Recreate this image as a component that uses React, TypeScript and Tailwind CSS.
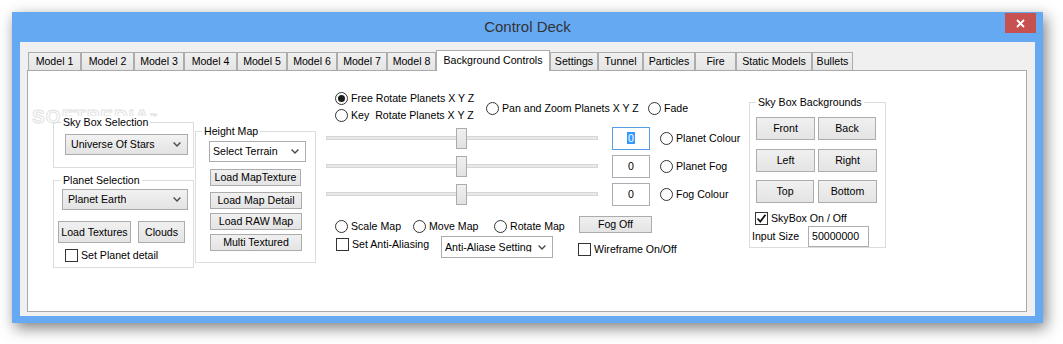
import React from 'react';

const ui = "font-['Liberation_Sans',Arial,sans-serif]";

function Chevron() {
  return (
    <svg width="8" height="5" viewBox="0 0 8 5" className="shrink-0">
      <path d="M0.6 0.6 L4 4 L7.4 0.6" fill="none" stroke="#4a4a4a" strokeWidth="1.4" />
    </svg>
  );
}

// gray = DropDownList look, white = DropDown look
function Combo({ text, className, gray }: { text: string; className: string; gray?: boolean }) {
  return (
    <div
      className={`flex items-center justify-between gap-[6px] overflow-hidden border border-[#acacac] pr-[6px] text-[10.6px] leading-none ${
        gray ? 'bg-gradient-to-b from-[#f2f2f2] to-[#e3e3e3] pl-[5px]' : 'bg-white pl-[3px]'
      } ${className}`}
    >
      <span className="min-w-0 overflow-hidden whitespace-nowrap">{text}</span>
      <Chevron />
    </div>
  );
}

function Btn({ label, className }: { label: string; className: string }) {
  return (
    <button
      type="button"
      className={`flex shrink-0 items-center justify-center whitespace-nowrap border border-[#acacac] bg-gradient-to-b from-[#f0f0f0] to-[#e4e4e4] text-[10.6px] leading-none text-black ${className}`}
    >
      {label}
    </button>
  );
}

function Radio({ checked }: { checked?: boolean }) {
  return (
    <span className="flex h-[13px] w-[13px] shrink-0 items-center justify-center rounded-full border border-[#333] bg-white">
      {checked && <span className="h-[7px] w-[7px] rounded-full bg-[#1c1c1c]" />}
    </span>
  );
}

function Check({ checked }: { checked?: boolean }) {
  return (
    <span className="flex h-[13px] w-[13px] shrink-0 items-center justify-center border border-[#333] bg-white">
      {checked && (
        <svg width="11" height="11" viewBox="0 0 11 11">
          <path d="M1.5 5.5 L4.3 8.5 L9.5 1.8" fill="none" stroke="#111" strokeWidth="1.8" />
        </svg>
      )}
    </span>
  );
}

function Group({ title, titleLeft, className, children }: { title: string; titleLeft: string; className: string; children: React.ReactNode }) {
  return (
    <div className={`relative shrink-0 border border-[#dcdcdc] ${className}`}>
      <span className={`absolute -top-[7px] bg-white px-[2px] text-[10.6px] leading-[13px] whitespace-nowrap ${titleLeft}`}>{title}</span>
      {children}
    </div>
  );
}

function SliderRow({ value, focused, label }: { value: string; focused?: boolean; label: string }) {
  return (
    <div className="flex h-[28px] items-center">
      <div className="relative flex h-[21px] w-[272px] items-center">
        <div className="h-[4px] w-full border border-[#d6d6d6] bg-[#e7eaea]" />
        <div className="absolute left-[130px] top-0 h-[21px] w-[11px] border border-[#acacac] bg-gradient-to-b from-[#f0f0f0] to-[#e2e2e2]" />
      </div>
      <div
        className={`ml-[14px] flex h-[23px] w-[38px] items-center justify-center border bg-white text-[10.6px] ${
          focused ? 'border-[#569de5]' : 'border-[#abadb3]'
        }`}
      >
        {focused ? <span className="bg-[#3399ff] px-[1px] leading-[12px] text-white">{value}</span> : value}
      </div>
      <div className="ml-[10px] flex items-center gap-[3px]">
        <Radio />
        <span className="whitespace-nowrap">{label}</span>
      </div>
    </div>
  );
}

const tabs = [
  { t: 'Model 1', w: 'w-[53px]' },
  { t: 'Model 2', w: 'w-[53px]' },
  { t: 'Model 3', w: 'w-[50px]' },
  { t: 'Model 4', w: 'w-[53px]' },
  { t: 'Model 5', w: 'w-[50px]' },
  { t: 'Model 6', w: 'w-[50px]' },
  { t: 'Model 7', w: 'w-[50px]' },
  { t: 'Model 8', w: 'w-[49px]' },
  { t: 'Background Controls', w: 'w-[114px]', active: true },
  { t: 'Settings', w: 'w-[48px]' },
  { t: 'Tunnel', w: 'w-[45px]' },
  { t: 'Particles', w: 'w-[52px]' },
  { t: 'Fire', w: 'w-[41px]' },
  { t: 'Static Models', w: 'w-[76px]' },
  { t: 'Bullets', w: 'w-[41px]' },
];

export default function App() {
  return (
    <div className={`h-[344px] w-[1063px] overflow-hidden bg-white pl-[12px] pt-[12px] text-black ${ui}`}>
      <div className="flex h-[311px] w-[1031px] flex-col bg-[#66a9f3] shadow-[3px_5px_14px_rgba(0,0,0,0.5)]">
        {/* title bar */}
        <div className="grid h-[30px] shrink-0 grid-cols-[1fr_auto_1fr]">
          <div />
          <div className="self-center pt-[1px] text-[15px] text-[#333]">Control Deck</div>
          <div className="flex justify-end pr-[7px] pt-[1px]">
            <div className="flex h-[20px] w-[31px] items-center justify-center bg-[#c75050]">
              <svg width="9" height="9" viewBox="0 0 9 9">
                <path d="M1 1 L8 8 M8 1 L1 8" stroke="#fff" strokeWidth="1.8" />
              </svg>
            </div>
          </div>
        </div>

        {/* client area */}
        <div className="mx-[8px] h-[274px] bg-[#f0f0f0] pl-[7px] pt-[8px]">
          <div className="ml-[1px] flex h-[20px] items-end">
            {tabs.map((tab) =>
              tab.active ? (
                <div
                  key={tab.t}
                  className={`relative z-10 -mb-[1px] flex h-[21px] items-center justify-center border-x border-t border-[#acacac] bg-white pb-[1px] text-[10.6px] whitespace-nowrap ${tab.w}`}
                >
                  {tab.t}
                </div>
              ) : (
                <div
                  key={tab.t}
                  className={`flex h-[18px] items-center justify-center border-x border-t border-[#acacac] bg-gradient-to-b from-[#f0f0f0] to-[#e5e5e5] text-[10.6px] whitespace-nowrap ${tab.w}`}
                >
                  {tab.t}
                </div>
              )
            )}
          </div>

          {/* tab page */}
          <div className="relative flex h-[242px] w-[1000px] items-start border border-[#a9a9a9] bg-white pl-[25px] text-[10.6px] leading-none">
            <span className="pointer-events-none absolute left-[4px] top-[36px] text-[19px] font-bold leading-none tracking-[1px] text-transparent [-webkit-text-stroke:1px_#e2e2e2]">
              SOFTPEDIA<sup className="text-[8px] [-webkit-text-stroke:0.5px_#e2e2e2]">™</sup>
            </span>

            {/* left column */}
            <div className="mt-[51px] flex w-[141px] shrink-0 flex-col">
              <Group title="Sky Box Selection" titleLeft="left-[7px]" className="h-[46px] w-[141px]">
                <Combo gray text="Universe Of Stars" className="ml-[11px] mt-[11px] h-[21px] w-[123px]" />
              </Group>
              <Group title="Planet Selection" titleLeft="left-[7px]" className="mt-[12px] h-[88px] w-[141px]">
                <Combo gray text="Planet Earth" className="ml-[8px] mt-[8px] h-[21px] w-[126px]" />
                <div className="ml-[4px] mt-[11px] flex">
                  <Btn label="Load Textures" className="h-[22px] w-[73px]" />
                  <Btn label="Clouds" className="ml-[7px] h-[22px] w-[47px]" />
                </div>
                <div className="ml-[11px] mt-[6px] flex items-center gap-[3px]">
                  <Check />
                  <span>Set Planet detail</span>
                </div>
              </Group>
            </div>

            {/* height map */}
            <Group title="Height Map" titleLeft="left-[6px]" className="ml-[1px] mt-[60px] h-[132px] w-[121px]">
              <Combo text="Select Terrain" className="ml-[13px] mt-[9px] h-[21px] w-[97px]" />
              <div className="ml-[14px] mt-[7px] flex flex-col">
                <Btn label="Load MapTexture" className="h-[17px] w-[91px]" />
                <Btn label="Load Map Detail" className="mt-[6px] h-[17px] w-[92px]" />
                <Btn label="Load RAW Map" className="mt-[4px] h-[17px] w-[92px]" />
                <Btn label="Multi Textured" className="mt-[4px] h-[17px] w-[92px]" />
              </div>
            </Group>

            {/* middle controls */}
            <div className="ml-[10px] mt-[18px] flex w-[423px] shrink-0 flex-col">
              <div className="flex h-[35px] items-start">
                <div className="flex w-[160px] flex-col pl-[9px]">
                  <div className="flex h-[18px] items-center gap-[3px]">
                    <Radio checked />
                    <span className="whitespace-nowrap">Free Rotate Planets X Y Z</span>
                  </div>
                  <div className="flex h-[17px] items-center gap-[3px]">
                    <Radio />
                    <span className="whitespace-pre">Key  Rotate Planets X Y Z</span>
                  </div>
                </div>
                <div className="mt-[10px] flex h-[18px] w-[162px] items-center gap-[3px]">
                  <Radio />
                  <span className="whitespace-nowrap">Pan and Zoom Planets X Y Z</span>
                </div>
                <div className="mt-[10px] flex h-[18px] items-center gap-[3px]">
                  <Radio />
                  <span>Fade</span>
                </div>
              </div>

              <SliderRow value="0" focused label="Planet Colour" />
              <SliderRow value="0" label="Planet Fog" />
              <SliderRow value="0" label="Fog Colour" />

              <div className="mt-[8px] flex items-start pl-[9px]">
                <div className="mt-[4px] flex w-[78px] items-center gap-[3px]">
                  <Radio />
                  <span>Scale Map</span>
                </div>
                <div className="mt-[4px] flex w-[81px] items-center gap-[3px]">
                  <Radio />
                  <span>Move Map</span>
                </div>
                <div className="mt-[4px] flex w-[85px] items-center gap-[3px]">
                  <Radio />
                  <span>Rotate Map</span>
                </div>
                <Btn label="Fog Off" className="h-[17px] w-[73px]" />
              </div>

              <div className="mt-[3px] flex items-start pl-[10px]">
                <div className="mt-[2px] flex w-[105px] items-center gap-[3px]">
                  <Check />
                  <span className="whitespace-nowrap">Set Anti-Aliasing</span>
                </div>
                <Combo text="Anti-Aliase Settings" className="h-[22px] w-[112px]" />
                <div className="ml-[25px] mt-[7px] flex items-center gap-[3px]">
                  <Check />
                  <span className="whitespace-nowrap">Wireframe On/Off</span>
                </div>
              </div>
            </div>

            {/* sky box backgrounds */}
            <Group title="Sky Box Backgrounds" titleLeft="left-[6px]" className="mt-[31px] h-[146px] w-[137px]">
              <div className="ml-[6px] mt-[14px] flex flex-col">
                <div className="flex gap-[3px]">
                  <Btn label="Front" className="h-[23px] w-[59px]" />
                  <Btn label="Back" className="h-[23px] w-[58px]" />
                </div>
                <div className="mt-[9px] flex gap-[3px]">
                  <Btn label="Left" className="h-[23px] w-[59px]" />
                  <Btn label="Right" className="h-[23px] w-[59px]" />
                </div>
                <div className="mt-[8px] flex gap-[4px]">
                  <Btn label="Top" className="h-[23px] w-[58px]" />
                  <Btn label="Bottom" className="h-[23px] w-[59px]" />
                </div>
              </div>
              <div className="ml-[5px] mt-[9px] flex items-center gap-[3px]">
                <Check checked />
                <span className="whitespace-nowrap">SkyBox On / Off</span>
              </div>
              <div className="ml-[2px] mt-[1px] flex items-center">
                <span className="w-[56px] whitespace-nowrap">Input Size</span>
                <div className="flex h-[21px] w-[61px] items-center border border-[#abadb3] bg-white pl-[3px]">50000000</div>
              </div>
            </Group>
          </div>
        </div>
      </div>
    </div>
  );
}
